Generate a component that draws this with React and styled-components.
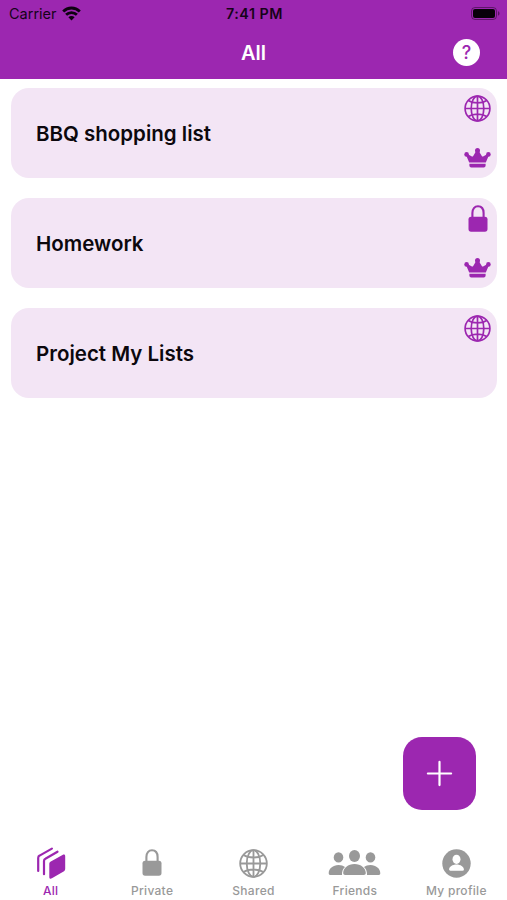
import React, { useState } from 'react';
import styled, { createGlobalStyle } from 'styled-components';

const PURPLE = '#9c27b0';
const GRAY = '#999999';

const lists = [
  { id: 1, name: 'BBQ shopping list', shared: true, owner: true },
  { id: 2, name: 'Homework', shared: false, owner: true },
  { id: 3, name: 'Project My Lists', shared: true, owner: false },
];

const WifiIcon = () => (
  <svg width="19" height="15" viewBox="0 0 19 15" fill="none" stroke="#0d0210" strokeWidth="2.8">
    <path d="M1.2 5.4a11.8 11.8 0 0 1 16.6 0" />
    <path d="M4.1 8.8a7.7 7.7 0 0 1 10.8 0" />
    <path d="M6.4 11.2a4.4 4.4 0 0 1 6.2 0L9.5 14.4z" fill="#0d0210" stroke="none" />
  </svg>
);

const BatteryIcon = () => (
  <svg width="29" height="13" viewBox="0 0 29 13">
    <rect x="0.5" y="0.5" width="25" height="12" rx="3.5" fill="none" stroke="#160319" strokeOpacity="0.45" />
    <rect x="2" y="2" width="22" height="9" rx="2" fill="#08000a" />
    <path d="M27 4.3c2 .7 2 3.7 0 4.4z" fill="#160319" fillOpacity="0.5" />
  </svg>
);

const GlobeIcon = ({ size = 27 }) => (
  <svg width={size} height={size} viewBox="0 0 27 27" fill="none" stroke="currentColor" strokeWidth="1.7">
    <circle cx="13.5" cy="13.5" r="12.4" />
    <ellipse cx="13.5" cy="13.5" rx="6.3" ry="12.4" />
    <path d="M13.5 1v25M1 13.5h25M4.3 5.5c4.6 3.2 13.8 3.2 18.4 0M4.3 21.5c4.6-3.2 13.8-3.2 18.4 0" />
  </svg>
);

const LockIcon = () => (
  <svg width="20" height="28" viewBox="0 0 20 28">
    <path d="M4.4 13V8C4.4 3.8 6.6 1.3 10 1.3S15.6 3.8 15.6 8v5" fill="none" stroke="currentColor" strokeWidth="2.1" />
    <rect x="0.5" y="11.7" width="19" height="15" rx="2.6" fill="currentColor" />
  </svg>
);

const CrownIcon = () => (
  <svg width="27" height="20" viewBox="0 0 27 20" fill="currentColor">
    <circle cx="13.5" cy="2.5" r="2.5" />
    <circle cx="2.6" cy="6.4" r="2.3" />
    <circle cx="24.4" cy="6.4" r="2.3" />
    <path d="M2.2 7.4l1.7-1.2 4 2.2c.6.3 1 .2 1.3-.4l2.7-4.4h3.2l2.7 4.4c.3.6.7.7 1.3.4l4-2.2 1.7 1.2-3 7.2H5.2z" />
    <path d="M5.4 15.7h16.2v1.9c0 1.2-.6 1.8-1.8 1.8H7.2c-1.2 0-1.8-.6-1.8-1.8z" />
  </svg>
);

const StackIcon = () => (
  <svg width="30" height="32" viewBox="0 0 30 32" fill="none" stroke="currentColor" strokeWidth="2.2" strokeLinecap="round" strokeLinejoin="round">
    <path d="M2.2 24V10.9c0-1.1.4-1.8 1.4-2.3L15.9 1.6" />
    <path d="M8 27.2V14.1c0-1.1.4-1.8 1.4-2.3L21.5 4.7" />
    <path d="M13.3 17.1c0-1.2.4-1.9 1.5-2.5L26.5 7.9c1.6-.9 2.7-.4 2.7 1.3v12.5c0 1.3-.4 2-1.6 2.7L15.9 31.2c-1.6.9-2.6.4-2.6-1.3z" fill="currentColor" stroke="none" />
  </svg>
);

const FriendsIcon = () => (
  <svg width="53" height="26" viewBox="0 0 53 26" fill="currentColor">
    <ellipse cx="10.5" cy="7.4" rx="4.8" ry="5.2" />
    <ellipse cx="42.5" cy="7.4" rx="4.8" ry="5.2" />
    <ellipse cx="26.5" cy="6" rx="5.5" ry="6" />
    <path d="M.7 23.2c0-4.7 4.3-8.3 9.8-8.3 2.7 0 4.8.7 6.5 2.1-2 1.8-3.2 4.3-3 8H2.6c-1.2 0-1.9-.6-1.9-1.8z" />
    <path d="M52.3 23.2c0-4.7-4.3-8.3-9.8-8.3-2.7 0-4.8.7-6.5 2.1 2 1.8 3.2 4.3 3 8h11.4c1.2 0 1.9-.6 1.9-1.8z" />
    <path d="M15.2 23.1c0-5 4.8-9.1 11.3-9.1s11.3 4.1 11.3 9.1c0 1.3-.7 1.9-2 1.9H17.2c-1.3 0-2-.6-2-1.9z" />
  </svg>
);

const ProfileIcon = () => (
  <svg width="29" height="29" viewBox="0 0 29 29">
    <circle cx="14.5" cy="14.5" r="14.2" fill="currentColor" />
    <ellipse cx="14.5" cy="10.3" rx="4" ry="4.6" fill="#fff" />
    <path d="M7.1 20.5c0-3 3.4-5.1 7.4-5.1s7.4 2.1 7.4 5.1c0 .8-.4 1.2-1.3 1.2H8.4c-.9 0-1.3-.4-1.3-1.2z" fill="#fff" />
  </svg>
);

const tabs = [
  { name: 'All', icon: <StackIcon /> },
  { name: 'Private', icon: <LockIcon /> },
  { name: 'Shared', icon: <GlobeIcon size={29} /> },
  { name: 'Friends', icon: <FriendsIcon /> },
  { name: 'My profile', icon: <ProfileIcon /> },
];

function App() {
  const [active, setActive] = useState('All');

  return (
    <>
      <GlobalStyle />
      <Screen>
        <Header>
          <StatusBar>
            <Carrier>Carrier <WifiIcon /></Carrier>
            <Time>7:41 PM</Time>
            <Battery><BatteryIcon /></Battery>
          </StatusBar>
          <NavBar>
            <Title>{active}</Title>
            <HelpButton aria-label="Help">?</HelpButton>
          </NavBar>
        </Header>
        <Lists>
          {lists.map((list) => (
            <Card key={list.id}>
              <CardName>{list.name}</CardName>
              <CardIcons>
                {list.shared ? <GlobeIcon /> : <LockIcon />}
                {list.owner && <CrownIcon />}
              </CardIcons>
            </Card>
          ))}
        </Lists>
        <Actions>
          <AddButton aria-label="Add list">
            <svg width="27" height="27" viewBox="0 0 27 27" stroke="#fff" strokeWidth="2.2" strokeLinecap="round">
              <path d="M13.5 1.9v23.2M1.9 13.5h23.2" />
            </svg>
          </AddButton>
        </Actions>
        <TabBar>
          {tabs.map((tab) => (
            <Tab key={tab.name} $active={tab.name === active} onClick={() => setActive(tab.name)}>
              <TabIcon>{tab.icon}</TabIcon>
              <TabLabel>{tab.name}</TabLabel>
            </Tab>
          ))}
        </TabBar>
      </Screen>
    </>
  );
}

const GlobalStyle = createGlobalStyle`
  * {
    box-sizing: border-box;
  }

  body {
    margin: 0;
    background: #fff;
    font-family: Inter, sans-serif;
  }

  button {
    padding: 0;
    border: none;
    font-family: inherit;
    cursor: pointer;
  }

  svg {
    display: block;
    flex-shrink: 0;
  }
`;

const Screen = styled.div`
  display: flex;
  flex-direction: column;
  height: 900px;
  background: #fff;
`;

const Header = styled.header`
  height: 79px;
  background: ${PURPLE};
`;

const StatusBar = styled.div`
  display: grid;
  grid-template-columns: 1fr auto 1fr;
  align-items: center;
  height: 27px;
  padding: 0 7px 0 9px;
  color: #160319;
  font-size: 14.5px;
`;

const Carrier = styled.div`
  display: flex;
  align-items: center;
  gap: 5px;
`;

const Time = styled.div`
  font-size: 14.3px;
  font-weight: 600;
  letter-spacing: 0.5px;
`;

const Battery = styled.div`
  display: flex;
  justify-content: flex-end;
`;

const NavBar = styled.div`
  display: grid;
  grid-template-columns: 1fr auto 1fr;
  align-items: center;
  height: 51px;
  padding: 0 27px;
`;

const Title = styled.h1`
  grid-column: 2;
  margin: 0;
  color: #fff;
  font-size: 20px;
  font-weight: 600;
`;

const HelpButton = styled.button`
  justify-self: end;
  width: 27px;
  height: 27px;
  border-radius: 50%;
  background: #fff;
  color: ${PURPLE};
  font-size: 18px;
  font-weight: 500;
  line-height: 27px;
`;

const Lists = styled.main`
  flex: 1;
  display: flex;
  flex-direction: column;
  gap: 20px;
  padding: 9px 10px 0 11px;
`;

const Card = styled.div`
  display: flex;
  align-items: center;
  justify-content: space-between;
  height: 90px;
  padding: 0 6px 0 25px;
  border-radius: 18px;
  background: #f3e5f5;
`;

const CardName = styled.h2`
  margin: 0;
  color: #0c080d;
  font-size: 20.5px;
  font-weight: 600;
`;

const CardIcons = styled.div`
  display: flex;
  flex-direction: column;
  align-items: center;
  justify-content: space-between;
  align-self: stretch;
  width: 27px;
  padding: 7px 0 10px;
  color: ${PURPLE};
`;

const Actions = styled.div`
  display: flex;
  justify-content: flex-end;
  padding: 0 31px 34px 0;
`;

const AddButton = styled.button`
  display: flex;
  align-items: center;
  justify-content: center;
  width: 73px;
  height: 73px;
  border-radius: 19px;
  background: ${PURPLE};
`;

const TabBar = styled.nav`
  display: flex;
  height: 56px;
`;

const Tab = styled.button`
  flex: 1;
  display: flex;
  flex-direction: column;
  align-items: center;
  background: none;
  color: ${({ $active }) => ($active ? PURPLE : GRAY)};
`;

const TabIcon = styled.span`
  display: flex;
  align-items: center;
  justify-content: center;
  height: 38px;
`;

const TabLabel = styled.span`
  font-size: 12px;
  font-weight: 500;
  letter-spacing: 0.3px;
  line-height: 18px;
`;

export default App;
